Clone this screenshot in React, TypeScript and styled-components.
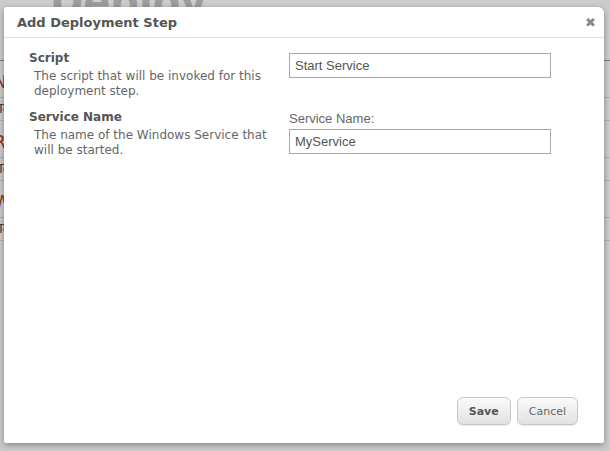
import { FC } from "react";
import styled, { createGlobalStyle } from "styled-components";

const GlobalStyle = createGlobalStyle`
  html, body {
    margin: 0;
    padding: 0;
    background: #fff;
  }
  body {
    font-family: "DejaVu Sans", Verdana, sans-serif;
  }
`;

const Page = styled.div`
  position: relative;
  width: 610px;
  height: 451px;
  overflow: hidden;
  background: #fff;
`;

const PageHeader = styled.h1`
  margin: 0;
  padding: 0 0 0 50px;
  height: 60px;
  line-height: 4px;
  font-family: "DejaVu Sans", sans-serif;
  font-size: 40px;
  font-weight: bold;
  color: #c4c4c4;
  border-bottom: 1px solid #999;
  overflow: hidden;
`;

const Row = styled.div`
  display: flex;
  flex-direction: column;
  border-bottom: 1px solid #ddd;
  padding: 6px 0 0 0;
`;

const RowTitle = styled.div`
  font-size: 17px;
  color: #c0392b;
  line-height: 30px;
  margin-left: -6px;
`;

const RowText = styled.div`
  font-size: 13px;
  color: #555;
  line-height: 22px;
  margin-left: -3px;
  border-top: 1px solid #ddd;
`;

const Backdrop = styled.div`
  position: absolute;
  inset: 0;
  background: rgba(0, 0, 0, 0.2);
`;

const Dialog = styled.div`
  position: absolute;
  left: 4px;
  top: 7px;
  width: 600px;
  height: 436px;
  background: #fff;
  border-radius: 2px 6px 2px 2px;
  box-shadow: 0 2px 6px rgba(0, 0, 0, 0.35);
  display: flex;
  flex-direction: column;
`;

const DialogHeader = styled.div`
  display: flex;
  align-items: center;
  justify-content: space-between;
  height: 29px;
  padding: 1px 8px 0 13px;
  border-bottom: 1px solid #e2e2e2;
`;

const DialogTitle = styled.div`
  font-size: 13px;
  font-weight: bold;
  color: #555;
`;

const Close = styled.span`
  font-family: "DejaVu Sans", sans-serif;
  font-size: 13px;
  font-weight: bold;
  color: #888;
  line-height: 1;
`;

const DialogBody = styled.div`
  flex: 1;
  display: flex;
  flex-direction: column;
  gap: 10px;
  padding: 12px 0 0 25px;
`;

const Field = styled.div`
  display: grid;
  grid-template-columns: 260px 262px;
`;

const FieldInfo = styled.div`
  display: flex;
  flex-direction: column;
`;

const FieldName = styled.div`
  font-size: 12px;
  font-weight: bold;
  color: #555;
  line-height: 16px;
`;

const FieldHelp = styled.div`
  font-size: 12px;
  color: #666;
  line-height: 15px;
  padding: 3px 0 0 5px;
`;

const FieldControl = styled.div<{ $top: number }>`
  display: flex;
  flex-direction: column;
  gap: 3px;
  padding-top: ${(p) => p.$top}px;
`;

const ControlLabel = styled.label`
  font-family: "Liberation Sans", Arial, sans-serif;
  font-size: 13px;
  color: #666;
  line-height: 15px;
`;

const TextBox = styled.input`
  box-sizing: border-box;
  width: 262px;
  height: 25px;
  border: 1px solid #a9a9a9;
  padding: 0 5px;
  font-family: "Liberation Sans", Arial, sans-serif;
  font-size: 13px;
  color: #555;
  outline: none;
`;

const DialogFooter = styled.div`
  display: flex;
  justify-content: flex-end;
  gap: 6px;
  padding: 0 26px 18px 0;
`;

const Button = styled.button<{ $primary?: boolean }>`
  height: 28px;
  padding: 0 11px;
  border: 1px solid #c8c8c8;
  border-radius: 6px;
  background: linear-gradient(#fafafa, #e2e2e2);
  box-shadow: 0 1px 1px rgba(0, 0, 0, 0.1);
  font-family: "DejaVu Sans", Verdana, sans-serif;
  font-size: 11px;
  font-weight: ${(p) => (p.$primary ? "bold" : "normal")};
  color: ${(p) => (p.$primary ? "#555" : "#666")};
`;

const rows = [
  { title: "Ne", text: "Text" },
  { title: "Run", text: "Test" },
  { title: "Wait", text: "Text" },
];

const App: FC = () => {
  return (
    <Page>
      <GlobalStyle />
      <PageHeader>Deploy</PageHeader>
      {rows.map((r) => (
        <Row key={r.title}>
          <RowTitle>{r.title}</RowTitle>
          <RowText>{r.text}</RowText>
        </Row>
      ))}
      <Backdrop />
      <Dialog>
        <DialogHeader>
          <DialogTitle>Add Deployment Step</DialogTitle>
          <Close>✖</Close>
        </DialogHeader>
        <DialogBody>
          <Field>
            <FieldInfo>
              <FieldName>Script</FieldName>
              <FieldHelp>
                The script that will be invoked for this deployment step.
              </FieldHelp>
            </FieldInfo>
            <FieldControl $top={3}>
              <TextBox defaultValue="Start Service" />
            </FieldControl>
          </Field>
          <Field>
            <FieldInfo>
              <FieldName>Service Name</FieldName>
              <FieldHelp>
                The name of the Windows Service that will be started.
              </FieldHelp>
            </FieldInfo>
            <FieldControl $top={2}>
              <ControlLabel>Service Name:</ControlLabel>
              <TextBox defaultValue="MyService" />
            </FieldControl>
          </Field>
        </DialogBody>
        <DialogFooter>
          <Button $primary>Save</Button>
          <Button>Cancel</Button>
        </DialogFooter>
      </Dialog>
    </Page>
  );
};

export default App;
